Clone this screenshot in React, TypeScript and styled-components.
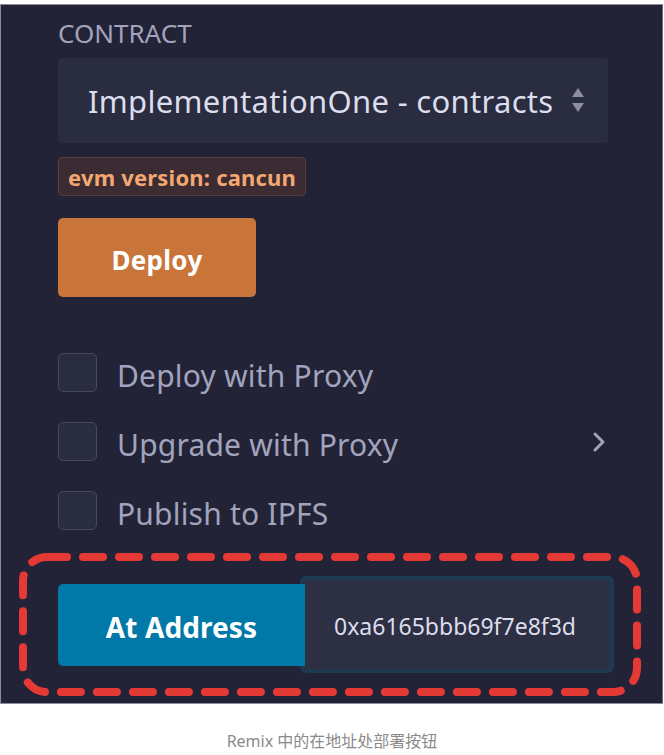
import React from "react";
import styled, { createGlobalStyle } from "styled-components";

const GlobalStyle = createGlobalStyle`
  html, body { margin: 0; padding: 0; background: #ffffff; }
  body { font-family: "Noto Sans", "Open Sans", sans-serif; }
`;

const Page = styled.div`
  width: 664px;
  padding-top: 4px;
`;

const Panel = styled.div`
  position: relative;
  box-sizing: border-box;
  width: 663px;
  height: 700px;
  background: #222336;
  border: 1px solid #8c8d99;
  border-right-color: #6d6e7c;
  padding: 13px 0 0 57px;
  display: flex;
  flex-direction: column;
`;

const Label = styled.div`
  font-size: 26px;
  line-height: 31px;
  color: #a2a3bd;
`;

const Select = styled.div`
  position: relative;
  box-sizing: border-box;
  margin-top: 9px;
  width: 550px;
  height: 85px;
  background: #2a2c3f;
  border-radius: 4px;
  display: flex;
  align-items: center;
  padding: 0 40px 0 30px;
`;

const SelectText = styled.div`
  font-size: 31px;
  color: #dcdded;
  white-space: nowrap;
  letter-spacing: 0.3px;
  padding-top: 1px;
`;

const Arrows = styled.svg`
  position: absolute;
  right: 23px;
  top: 29px;
`;

const Badge = styled.div`
  box-sizing: border-box;
  margin-top: 14px;
  align-self: flex-start;
  height: 39px;
  padding: 0 9px;
  display: flex;
  align-items: center;
  background: #3b2b33;
  border: 1px solid #5a3d3a;
  border-radius: 4px;
  color: #f2a870;
  font-weight: 700;
  font-size: 22px;
  letter-spacing: 0.2px;
`;

const DeployButton = styled.button`
  margin-top: 22px;
  width: 198px;
  height: 79px;
  border: none;
  border-radius: 5px;
  background: #c97539;
  color: #ffffff;
  font-family: "Noto Sans", sans-serif;
  font-weight: 700;
  font-size: 26px;
  letter-spacing: 0.3px;
  padding: 4px 0 0 0;
`;

const Options = styled.div`
  margin-top: 56px;
  display: flex;
  flex-direction: column;
  gap: 30px;
  width: 550px;
`;

const OptionRow = styled.div`
  display: flex;
  align-items: center;
  height: 39px;
`;

const Box = styled.div`
  box-sizing: border-box;
  width: 39px;
  height: 39px;
  background: #2a2c3f;
  border: 1px solid #45475a;
  border-radius: 5px;
  flex: none;
`;

const OptionText = styled.span`
  margin-left: 20px;
  font-size: 30px;
  color: #a2a3bd;
  letter-spacing: 0.2px;
  flex: 1;
  padding-top: 5px;
`;

const Chevron = styled.svg`
  margin-right: 1px;
`;

const AddressArea = styled.div`
  position: relative;
  margin-top: 46px;
  display: flex;
  align-items: center;
`;

const AtButton = styled.button`
  width: 247px;
  height: 82px;
  border: none;
  border-radius: 5px 0 0 5px;
  background: #0079a8;
  color: #ffffff;
  font-family: "Noto Sans", sans-serif;
  font-weight: 700;
  font-size: 28px;
  letter-spacing: 0.1px;
  padding: 5px 0 0 0;
  position: relative;
  z-index: 1;
`;

const AddressInput = styled.div`
  box-sizing: border-box;
  margin-left: -5px;
  width: 314px;
  height: 97px;
  background: #2d2f42;
  border: 4px solid #1f3a50;
  border-radius: 6px;
  display: flex;
  align-items: center;
  padding: 3px 0 0 30px;
  font-size: 23px;
  color: #dcdded;
`;

const Annotation = styled.svg`
  position: absolute;
  left: 0;
  top: 0;
  pointer-events: none;
`;

const Caption = styled.div`
  margin-top: 24px;
  text-align: center;
  font-family: "Noto Sans", "Noto Sans CJK SC", sans-serif;
  font-size: 16px;
  color: #8a8a8a;
`;

export default function App() {
  return (
    <Page>
      <GlobalStyle />
      <Panel>
        <Label>CONTRACT</Label>
        <Select>
          <SelectText>ImplementationOne - contracts</SelectText>
          <Arrows width="14" height="26" viewBox="0 0 14 26">
            <path d="M7 1 L13 10 L1 10 Z" fill="#8d8fa3" />
            <path d="M7 25 L13 16 L1 16 Z" fill="#8d8fa3" />
          </Arrows>
        </Select>
        <Badge>evm version: cancun</Badge>
        <DeployButton>Deploy</DeployButton>
        <Options>
          <OptionRow>
            <Box />
            <OptionText>Deploy with Proxy</OptionText>
          </OptionRow>
          <OptionRow>
            <Box />
            <OptionText>Upgrade with Proxy</OptionText>
            <Chevron width="16" height="22" viewBox="0 0 16 22">
              <path d="M4 3 L12 11 L4 19" fill="none" stroke="#a2a3bd" strokeWidth="3" strokeLinecap="round" strokeLinejoin="round" />
            </Chevron>
          </OptionRow>
          <OptionRow>
            <Box />
            <OptionText>Publish to IPFS</OptionText>
          </OptionRow>
        </Options>
        <AddressArea>
          <AtButton>At Address</AtButton>
          <AddressInput>0xa6165bbb69f7e8f3d</AddressInput>
        </AddressArea>
        <Annotation width="663" height="700" viewBox="0 0 663 700">
          <rect x="22" y="552" width="614" height="135" rx="24" ry="24" fill="none" stroke="#e53935" strokeWidth="8" strokeDasharray="20 16" strokeLinecap="round" />
        </Annotation>
      </Panel>
      <Caption>Remix 中的在地址处部署按钮</Caption>
    </Page>
  );
}
